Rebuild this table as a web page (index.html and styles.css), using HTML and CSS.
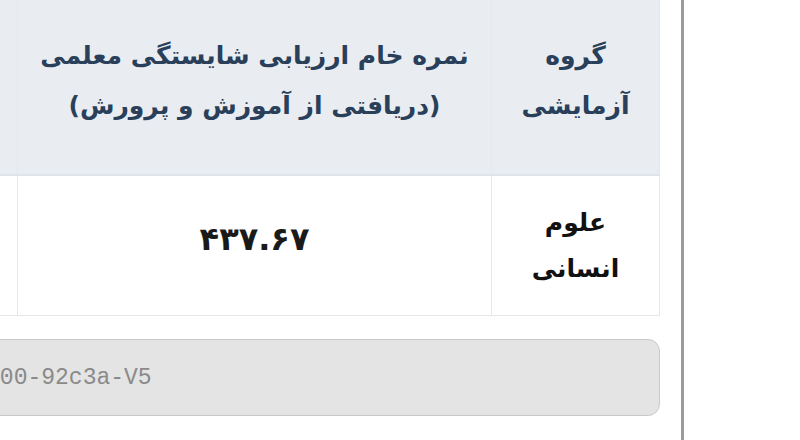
FILE: index.html
```html
<!DOCTYPE html>
<html lang="fa">
<head>
<meta charset="utf-8">
<link rel="stylesheet" href="styles.css">
</head>
<body>
<div class="page">
  <div class="main">
    <table class="grid">
      <colgroup>
        <col class="c-group">
        <col class="c-score">
        <col class="c-extra">
      </colgroup>
      <thead>
        <tr>
          <th class="th-group">گروه<br>آزمایشی</th>
          <th class="th-score">نمره خام ارزیابی شایستگی معلمی<br>(دریافتی از آموزش و پرورش)</th>
          <th class="th-extra">نمره</th>
        </tr>
      </thead>
      <tbody>
        <tr>
          <td class="td-group">علوم<br>انسانی</td>
          <td class="td-score">۴۳۷.۶۷</td>
          <td class="td-extra"></td>
        </tr>
      </tbody>
    </table>
    <div class="code-box"><span class="code">a7f3e1b4-1400-92c3a-V5</span></div>
  </div>
  <div class="rule"></div>
  <div class="rest"></div>
</div>
</body>
</html>
```

FILE: styles.css
```css
html, body {
  margin: 0;
  padding: 0;
  background: #ffffff;
}

.page {
  display: flex;
  height: 440px;
  overflow: hidden;
}

.main {
  width: 660px;
  margin-right: 21px;
  flex: none;
  direction: rtl;
  overflow: hidden;
  font-family: "DejaVu Sans", "Noto Sans", sans-serif;
}

.grid {
  border-collapse: collapse;
  table-layout: fixed;
  width: 1000px;
  margin-top: -14px;
}

.c-group { width: 168px; }
.c-score { width: 474px; }
.c-extra { width: 358px; }

.grid th,
.grid td {
  border: 1px solid #e4e8ed;
  text-align: center;
  vertical-align: middle;
  padding: 0 12px;
}

.grid thead th {
  background: #e9edf1;
  color: #2a3f5a;
  font-weight: bold;
  font-size: 25px;
  line-height: 50px;
  height: 187px;
  border-bottom: 2px solid #dfe4ea;
}

.grid thead .th-extra {
  text-align: right;
  padding-right: 16px;
}

.grid tbody td {
  background: #ffffff;
  color: #111111;
  font-weight: bold;
  font-size: 25px;
  line-height: 46px;
  height: 139px;
}

.grid tbody .td-score {
  font-size: 32px;
  color: #1a1a1a;
  height: 125px;
  padding-bottom: 14px;
}

.code-box {
  width: 829px;
  height: 77px;
  margin-top: 23px;
  box-sizing: border-box;
  background: #e4e4e4;
  border: 1px solid #c9c9c9;
  border-radius: 12px;
  direction: ltr;
  text-align: left;
  display: flex;
  align-items: center;
  padding-left: 16px;
}

.code {
  font-family: "Liberation Mono", monospace;
  font-size: 23px;
  color: #8a8a8a;
}

.rule {
  width: 3px;
  flex: none;
  background: #9a9a9a;
}

.rest {
  flex: 1;
  background: #ffffff;
}
```
